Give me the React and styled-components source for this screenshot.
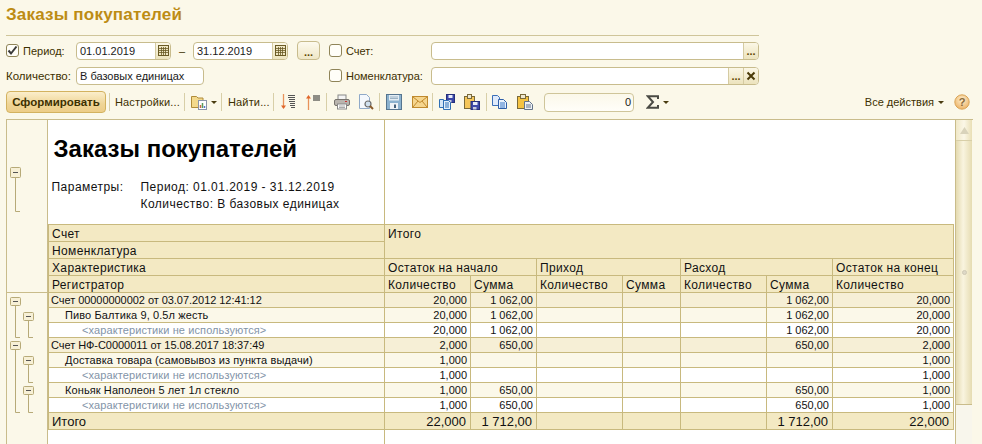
import React from "react";
import styled, { createGlobalStyle } from "styled-components";

const Global = createGlobalStyle`
  html, body { margin: 0; padding: 0; width: 982px; height: 444px; overflow: hidden; background: #fbf8e9; }
  #root { width: 982px; height: 444px; }
  * { box-sizing: border-box; }
`;

const Page = styled.div`
  width: 982px; height: 444px; display: flex; flex-direction: column;
  background: #fbf8e9; font-family: "Liberation Sans", Arial, sans-serif; color: #3d3000; overflow: hidden;
`;
const Title = styled.h1`
  margin: 0; height: 35px; padding: 5px 0 0 6px; font-size: 17px; line-height: 19px; font-weight: 700;
  color: #bd8c14; letter-spacing: 0.2px;
`;
const Filters = styled.div`
  margin-left: 6px; width: 753px; border-top: 1px solid #cfc59a; padding-top: 5px;
  display: grid; grid-template-columns: 70px 253px 102px 328px; grid-auto-rows: 19px; row-gap: 6px; align-items: center;
`;
const CheckField = styled.label`
  display: flex; align-items: center; gap: 4px; font-size: 11px; height: 19px;
`;
const Box = styled.span`
  width: 13px; height: 13px; border: 1px solid #8f8458; border-radius: 3px; background: #fffef8;
  display: flex; align-items: center; justify-content: center; flex: none;
`;
const Label = styled.span`
  font-size: 11.5px; white-space: nowrap;
`;
const DateRow = styled.div`
  display: flex; align-items: center;
`;
const Field = styled.div`
  width: ${p => p.$w}; height: ${p => p.$h || 18}px; display: flex; background: #fff;
  border: 1px solid #c8bc8d; border-radius: 4px; overflow: hidden; font-size: 11px; color: #1a1a1a;
  align-items: stretch; flex: none;
`;
const FieldText = styled.span`
  flex: 1; padding: 0 2px 0 3px; line-height: 16px; white-space: nowrap; overflow: hidden; text-align: ${p => p.$right ? "right" : "left"};
`;
const FieldBtn = styled.span`
  width: ${p => p.$w || 15}px; flex: none; border-left: 1px solid #d5cba2;
  background: linear-gradient(#fbf7e6, #ece3bd); display: flex; align-items: center; justify-content: center;
  color: #5d4600; font-weight: 700; font-size: 11px; line-height: 14px;
`;
const Dash = styled.span`
  width: 22px; text-align: center; font-size: 11px;
`;
const SmallBtn = styled.span`
  width: 23px; height: 19px; margin-left: 9px; border: 1px solid #c8bc8d; border-radius: 4px;
  background: linear-gradient(#fdfaee, #efe7c6); display: flex; align-items: flex-end; justify-content: center;
  color: #5d4600; font-size: 11px; font-weight: 700; line-height: 14px;
`;
const Toolbar = styled.div`
  margin-top: 6px; height: 22px; padding-left: 6px; display: flex; align-items: center; width: 972px; flex: none;
`;
const MainButton = styled.button`
  width: 100px; height: 22px; padding: 0; border: 1px solid #d3b25f; border-radius: 4px;
  background: linear-gradient(#fbeecb, #efd596 60%, #edcd88); font: 700 11.5px "Liberation Sans", Arial, sans-serif; color: #3d3000;
`;
const Sep = styled.span`
  width: 1px; height: 18px; background: #d8cfa8; flex: none; margin: 0 ${p => p.$r ?? 6}px 0 ${p => p.$l ?? 5}px;
`;
const ToolText = styled.span`
  font-size: 11px; letter-spacing: 0.15px; white-space: nowrap; width: ${p => p.$w}px; flex: none;
`;
const Icon = styled.span`
  width: 16px; height: 16px; flex: none; margin-right: ${p => p.$r || 0}px; display: flex;
`;
const Caret = styled.span`
  width: 0; height: 0; border-left: 3px solid transparent; border-right: 3px solid transparent; border-top: 3px solid #4a3c10;
  flex: none; margin-left: ${p => p.$l || 3}px; margin-top: 1px;
`;
const Counter = styled(Field)`
  margin: 0 12px 0 11px; height: 19px; border-color: #cfc59a; background: linear-gradient(#fbf8ea, #fffef9);
`;
const Spacer = styled.span` flex: 1; `;
const AllActions = styled.span`
  font-size: 11px; margin-right: 10px; display: flex; align-items: center; gap: 3px; white-space: nowrap;
`;
const Report = styled.div`
  margin: 6px 0 0 6px; width: 967px; flex: 1; min-height: 0; border-top: 1px solid #c9bc8b; display: flex; overflow: hidden;
`;
const Gutter = styled.div`
  width: 42px; flex: none; border-left: 1px solid #c9bc8b; border-right: 1px solid #c9bc8b; background: #fbf8e9;
`;
const Sheet = styled.div`
  width: 908px; flex: none; background: #fff; border-right: 1px solid #c9bc8b;
`;
const Table = styled.table`
  table-layout: fixed; width: 905px; border-collapse: collapse; font-size: 12px; color: #111;
`;
const TitleCell = styled.td`
  height: 104px; padding: 0 0 0 5px; vertical-align: top; border-right: 1px solid #c8b97e; border-bottom: 1px solid #c8b97e;
`;
const BlankCell = styled.td`
  border-bottom: 1px solid #c8b97e; border-left: 1px solid #c8b97e;
`;
const ReportTitle = styled.div`
  margin-top: 14px; font-size: 24px; line-height: 30px; font-weight: 700; color: #000;
`;
const Params = styled.div`
  margin: 15px 0 0 -2px; display: grid; grid-template-columns: 89px 1fr; font-size: 12px; line-height: 17px; letter-spacing: 0.47px; color: #111;
`;
const Head = styled.td`
  height: 17px; padding: 3px 3px 0; background: #f3e9c3; border: 1px solid #c8b97e; font-size: 12px; line-height: 12px;
  letter-spacing: 0.35px; vertical-align: top; white-space: nowrap;
`;
const bg = { 1: "#f6efd6", 2: "#fbf8e9", 3: "#ffffff" };
const Cell = styled.td`
  height: 15px; padding: 1px 3px 0; border: 1px solid #c8b97e; background: ${p => bg[p.$lvl]};
  font-size: 11px; line-height: 12px; white-space: nowrap; text-align: ${p => p.$num ? "right" : "left"};
`;
const Name = styled(Cell)`
  padding-left: ${p => p.$lvl === 1 ? 2 : p.$lvl === 2 ? 16 : 33}px;
  color: ${p => p.$lvl === 3 ? "#8394a8" : "#111"};
  letter-spacing: ${p => p.$lvl === 1 ? -0.05 : 0.1}px;
`;
const Total = styled.td`
  height: 17px; padding: 2px ${p => p.$num ? 4 : 3}px 0 3px; background: #f3e9c3; border: 1px solid #c8b97e; font-size: 13px; line-height: 14px;
  white-space: nowrap; text-align: ${p => p.$num ? "right" : "left"};
`;
const Rest = styled.td`
  height: 20px; padding: 0; border-right: 1px solid #c8b97e;
`;
const Scroll = styled.div`
  width: 16px; flex: none; display: flex; flex-direction: column;
`;
const ScrollBtn = styled.div`
  height: 21px; flex: none; background: linear-gradient(90deg, #f0e8c8, #fbf7e7 50%, #e9dfb6); border-bottom: 1px solid #d8cfa8;
  display: flex; align-items: center; justify-content: center;
`;
const Thumb = styled.div`
  height: 264px; flex: none; background: linear-gradient(90deg, #e4dab0, #f9f4df 45%, #e6dcb2); border-bottom: 1px solid #c9bc8b;
  display: flex; align-items: center; justify-content: center;
`;
const Track = styled.div` flex: 1; background: #f8f6ec; `;
const Grip = styled.div` width: 5px; height: 5px; border-radius: 50%; background: #ddd8c6; border: 1px solid #cfc9b4; `;

/* Icons */
const Check = () => (<svg width="11" height="11" viewBox="0 0 11 11"><path d="M1.5 5.5 L4 8.5 L9.5 1.5" fill="none" stroke="#3a3a3a" strokeWidth="2" /></svg>);
const Cal = () => (<svg width="11" height="11" viewBox="0 0 11 11"><rect x="0.5" y="0.5" width="10" height="10" fill="#efe6c3" stroke="#6a5a24" /><path d="M0.5 3.5H10.5M0.5 5.5H10.5M0.5 7.5H10.5M3.5 2V10.5M5.5 2V10.5M7.5 2V10.5" stroke="#6a5a24" strokeWidth="0.8" /></svg>);
const XIcon = () => (<svg width="10" height="10" viewBox="0 0 10 10"><path d="M1.5 1.5 L8.5 8.5 M8.5 1.5 L1.5 8.5" stroke="#4a3a08" strokeWidth="2" /></svg>);
const IFolder = () => (<svg viewBox="0 0 16 16" width="16" height="16"><path d="M0.5 2.5h5l1.5 1.5h5v9.5h-11.500z" fill="#f3d98c" stroke="#b08c3a" /><rect x="7.500" y="6.500" width="8" height="9" fill="#fff" stroke="#8a94a8" /><path d="M9.500 14v-3" stroke="#c64" strokeWidth="1.500" /><path d="M11.500 14v-5" stroke="#5a9a5a" strokeWidth="1.500" /><path d="M13.500 14v-2" stroke="#57c" strokeWidth="1.500" /></svg>);
const ISortDown = () => (<svg viewBox="0 0 16 16" width="16" height="16"><path d="M3.500 0v14" stroke="#e8925a" strokeWidth="1.300" /><path d="M1 11.500h5L3.500 15z" fill="#e0662a" /><path d="M8 1.500h7M8 3.500h7M9 5.500h6M9 7.500h6M10 9.500h5M10 11.500h5M11 13.500h4" stroke="#555" strokeWidth="1" /></svg>);
const ISortUp = () => (<svg viewBox="0 0 16 16" width="16" height="16"><path d="M3.500 3v13" stroke="#e8925a" strokeWidth="1.300" /><path d="M1 4.500h5L3.500 1z" fill="#e0662a" /><path d="M8 2h7M8 4h7M8 6h7" stroke="#222" strokeWidth="1.200" /></svg>);
const IPrint = () => (<svg viewBox="0 0 16 16" width="16" height="16"><rect x="4" y="1" width="8" height="5" fill="#f4f4f4" stroke="#888" /><rect x="0.500" y="5.500" width="15" height="6" rx="1.500" fill="#b9b4ae" stroke="#77736e" /><rect x="3.500" y="10" width="9" height="5" fill="#fff" stroke="#888" /><rect x="11" y="7" width="2" height="1" fill="#c33" /><path d="M5 12h6M5 13.500h6" stroke="#aaa" /></svg>);
const IPreview = () => (<svg viewBox="0 0 16 16" width="16" height="16"><path d="M1.500 0.500h7l3 3v11h-10z" fill="#f4f8fd" stroke="#8fa9c8" /><circle cx="10" cy="10" r="3" fill="#cfe0ef" stroke="#6b6b6b" strokeWidth="1.200" /><path d="M12 12l3 3" stroke="#8a5a2a" strokeWidth="2" /></svg>);
const IFloppy = () => (<svg viewBox="0 0 16 16" width="16" height="16"><rect x="0.500" y="0.500" width="15" height="15" fill="#8cb2cf" stroke="#56758f" /><rect x="3" y="1" width="10" height="5.500" fill="#e4edf4" /><path d="M4 3h8M4 4.500h8" stroke="#9bb2c4" /><rect x="4" y="9" width="8" height="6" fill="#eef3f7" /><rect x="8" y="10.500" width="2" height="3.500" fill="#44607a" /></svg>);
const IMail = () => (<svg viewBox="0 0 16 16" width="16" height="16"><rect x="0.500" y="2.500" width="15" height="11" fill="#f6d68e" stroke="#c08a2e" /><path d="M1 3l7 5.500L15 3M1 13l5-6M15 13l-5-6" fill="none" stroke="#c08a2e" /></svg>);
const ISaveAll = () => (<svg viewBox="0 0 16 16" width="16" height="16"><rect x="7.500" y="0.500" width="8" height="8" fill="#3a46a8" stroke="#26307a" /><rect x="9.500" y="1" width="4" height="3" fill="#e8ecf8" /><rect x="9.500" y="6" width="3" height="2.500" fill="#c8cce0" /><path d="M0.500 5.500h4v8h-4z" fill="#d6e6f6" stroke="#2f6fb5" /><path d="M4.500 6.500h5l2 2v7h-7z" fill="#e4f0fb" stroke="#2f6fb5" /><path d="M6 9h4M6 11h4M6 13h4" stroke="#2f6fb5" /></svg>);
const IPasteSave = () => (<svg viewBox="0 0 16 16" width="16" height="16"><rect x="0.500" y="2.500" width="10" height="12" fill="#f5c65a" stroke="#7a6a3a" /><rect x="3.500" y="0.500" width="4" height="4" fill="#eee8d0" stroke="#7a6a3a" /><rect x="7" y="7.500" width="8.500" height="8" fill="#3f4aa8" stroke="#26307a" /><rect x="9" y="8" width="4.500" height="3" fill="#e8ecf8" /><rect x="9" y="13" width="3.500" height="2.500" fill="#c8cce0" /></svg>);
const ICopy = () => (<svg viewBox="0 0 16 16" width="16" height="16"><path d="M0.500 1.500h5l2 2v8h-7z" fill="#dfeafb" stroke="#3b6fb8" /><path d="M6.500 5.500h5l3 3v6h-8z" fill="#eaf2fc" stroke="#2f5fa8" /><path d="M8 9h5M8 11h5M8 13h5" stroke="#3b78c8" /></svg>);
const IPaste = () => (<svg viewBox="0 0 16 16" width="16" height="16"><rect x="0.500" y="2.500" width="11" height="12" fill="#f5c343" stroke="#7a6a3a" /><rect x="3.500" y="0.500" width="5" height="4" fill="#eee8d0" stroke="#7a6a3a" /><path d="M7.500 7.500h5l3 3v5h-8z" fill="#eef1f5" stroke="#64748b" /><path d="M9 11h5M9 13h5" stroke="#64748b" /></svg>);
const ISigma = () => (<svg viewBox="0 0 16 16" width="16" height="16"><path d="M12 5V2.200H1.800L7 8l-5.200 5.800H12V11" fill="none" stroke="#4a4a44" strokeWidth="2" /></svg>);
const IHelp = () => (<svg viewBox="0 0 16 16" width="16" height="16"><defs><radialGradient id="hg" cx="50%" cy="35%" r="70%"><stop offset="0" stopColor="#fdf0d0" /><stop offset="1" stopColor="#ecae5e" /></radialGradient></defs><circle cx="8" cy="8" r="7.200" fill="url(#hg)" stroke="#d9a456" /><text x="8" y="12" textAnchor="middle" fontSize="11" fontWeight="700" fontFamily="Liberation Sans" fill="#8a6a3a">?</text></svg>);

const Outline = () => (
  <svg width="40" height="324" viewBox="0 0 40 324" style={{ display: "block" }}>
    <g fill="none" stroke="#b7aa78">
      <path d="M0 172.500H40" stroke="#c9bc8b" />
      <path d="M8.500 57V91.500H13" />
      <path d="M8.500 185V217.500H13M21.500 200V217.500H26" />
      <path d="M8.500 229V292.500H13M21.500 244V262.500H26M21.500 274V292.500H26" />
    </g>
    {[[3, 47, 10], [3, 177, 8], [16, 192, 8], [3, 221, 8], [16, 236, 8], [16, 266, 8]].map(([x, y, h], i) => (
      <g key={i}>
        <rect x={x + 0.5} y={y + 0.5} width="10" height={h} rx="1" fill="#f7f0d6" stroke="#b7aa78" />
        <path d={`M${x + 3} ${y + 0.5 + h / 2}H${x + 8}`} stroke="#555" />
      </g>
    ))}
  </svg>
);

const widths = [336, 86, 66, 86, 58, 86, 66, 121];
const rows = [
  [1, "Счет 00000000002 от 03.07.2012 12:41:12", "20,000", "1 062,00", "1 062,00", "20,000"],
  [2, "Пиво Балтика 9, 0.5л жесть", "20,000", "1 062,00", "1 062,00", "20,000"],
  [3, "<характеристики не используются>", "20,000", "1 062,00", "1 062,00", "20,000"],
  [1, "Счет НФ-С0000011 от 15.08.2017 18:37:49", "2,000", "650,00", "650,00", "2,000"],
  [2, "Доставка товара (самовывоз из пункта выдачи)", "1,000", "", "", "1,000"],
  [3, "<характеристики не используются>", "1,000", "", "", "1,000"],
  [2, "Коньяк Наполеон 5 лет 1л стекло", "1,000", "650,00", "650,00", "1,000"],
  [3, "<характеристики не используются>", "1,000", "650,00", "650,00", "1,000"],
];

export default function App() {
  return (
    <Page>
      <Global />
      <Title>Заказы покупателей</Title>
      <Filters>
        <CheckField><Box><Check /></Box>Период:</CheckField>
        <DateRow>
          <Field $w="95px"><FieldText>01.01.2019</FieldText><FieldBtn><Cal /></FieldBtn></Field>
          <Dash>–</Dash>
          <Field $w="95px"><FieldText>31.12.2019</FieldText><FieldBtn><Cal /></FieldBtn></Field>
          <SmallBtn>...</SmallBtn>
        </DateRow>
        <CheckField><Box />Счет:</CheckField>
        <Field $w="328px"><FieldText /><FieldBtn>...</FieldBtn></Field>
        <Label>Количество:</Label>
        <Field $w="128px"><FieldText>В базовых единицах</FieldText></Field>
        <CheckField><Box />Номенклатура:</CheckField>
        <Field $w="328px"><FieldText /><FieldBtn>...</FieldBtn><FieldBtn><XIcon /></FieldBtn></Field>
      </Filters>
      <Toolbar>
        <MainButton>Сформировать</MainButton>
        <Sep $l={3} $r={5} />
        <ToolText $w={64}>Настройки...</ToolText>
        <Sep $l={5} $r={6} />
        <Icon><IFolder /></Icon><Caret $l={4} />
        <Sep $l={4} $r={6} />
        <ToolText $w={40}>Найти...</ToolText>
        <Sep $l={5} $r={6} />
        <Icon $r={9}><ISortDown /></Icon>
        <Icon><ISortUp /></Icon>
        <Sep $l={5} $r={7} />
        <Icon $r={8}><IPrint /></Icon>
        <Icon><IPreview /></Icon>
        <Sep $l={5} $r={6} />
        <Icon $r={10}><IFloppy /></Icon>
        <Icon><IMail /></Icon>
        <Sep $l={4} $r={6} />
        <Icon $r={9}><ISaveAll /></Icon>
        <Icon><IPasteSave /></Icon>
        <Sep $l={6} $r={5} />
        <Icon $r={9}><ICopy /></Icon>
        <Icon><IPaste /></Icon>
        <Counter $w="90px"><FieldText $right>0</FieldText></Counter>
        <Icon><ISigma /></Icon><Caret $l={1} />
        <Spacer />
        <AllActions>Все действия <Caret $l={1} /></AllActions>
        <Icon $r={2}><IHelp /></Icon>
      </Toolbar>
      <Report>
        <Gutter><Outline /></Gutter>
        <Sheet>
          <Table>
            <colgroup>{widths.map((w, i) => <col key={i} style={{ width: w }} />)}</colgroup>
            <tbody>
              <tr>
                <TitleCell>
                  <ReportTitle>Заказы покупателей</ReportTitle>
                  <Params>
                    <span>Параметры:</span>
                    <span>Период: 01.01.2019 - 31.12.2019</span>
                    <span />
                    <span>Количество: В базовых единицах</span>
                  </Params>
                </TitleCell>
                <BlankCell colSpan={7} />
              </tr>
              <tr><Head>Счет</Head><Head colSpan={7} rowSpan={2}>Итого</Head></tr>
              <tr><Head>Номенклатура</Head></tr>
              <tr>
                <Head>Характеристика</Head>
                <Head colSpan={2}>Остаток на начало</Head>
                <Head colSpan={2}>Приход</Head>
                <Head colSpan={2}>Расход</Head>
                <Head>Остаток на конец</Head>
              </tr>
              <tr>
                <Head>Регистратор</Head>
                <Head>Количество</Head><Head>Сумма</Head>
                <Head>Количество</Head><Head>Сумма</Head>
                <Head>Количество</Head><Head>Сумма</Head>
                <Head>Количество</Head>
              </tr>
              {rows.map(([lvl, name, a, b, c, d], i) => (
                <tr key={i}>
                  <Name $lvl={lvl}>{name}</Name>
                  <Cell $lvl={lvl} $num>{a}</Cell>
                  <Cell $lvl={lvl} $num>{b}</Cell>
                  <Cell $lvl={lvl} />
                  <Cell $lvl={lvl} />
                  <Cell $lvl={lvl} />
                  <Cell $lvl={lvl} $num>{c}</Cell>
                  <Cell $lvl={lvl} $num>{d}</Cell>
                </tr>
              ))}
              <tr>
                <Total>Итого</Total>
                <Total $num>22,000</Total>
                <Total $num>1 712,00</Total>
                <Total /><Total /><Total />
                <Total $num>1 712,00</Total>
                <Total $num>22,000</Total>
              </tr>
              <tr><Rest /><td colSpan={7} /></tr>
            </tbody>
          </Table>
        </Sheet>
        <Scroll>
          <ScrollBtn>
            <svg width="9" height="7" viewBox="0 0 9 7"><path d="M4.500 0L9 7H0z" fill="#d9d3bb" /></svg>
          </ScrollBtn>
          <Thumb><Grip /></Thumb>
          <Track />
        </Scroll>
      </Report>
    </Page>
  );
}
